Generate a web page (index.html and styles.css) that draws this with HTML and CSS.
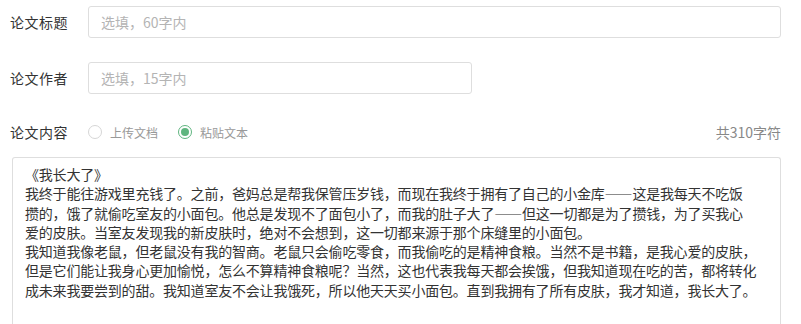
FILE: index.html
```html
<!DOCTYPE html>
<html lang="zh-CN">
<head>
    <meta charset="UTF-8">
    <meta name="viewport" content="width=device-width, initial-scale=1.0">
    <title>论文信息</title>
    <link rel="stylesheet" href="styles.css">
</head>
<body>
    <div class="form">
        <!-- 标题 -->
        <div class="row row-title">
            <label class="label">论文标题</label>
            <input class="input" type="text" placeholder="选填，60字内">
        </div>

        <!-- 作者 -->
        <div class="row row-author">
            <label class="label">论文作者</label>
            <input class="input input-short" type="text" placeholder="选填，15字内">
        </div>

        <!-- 内容 -->
        <div class="row row-content">
            <label class="label">论文内容</label>
            <div class="radio-group">
                <span class="radio"><i class="radio-dot"></i>上传文档</span>
                <span class="radio checked"><i class="radio-dot"></i>粘贴文本</span>
            </div>
            <div class="count">共<span class="count-num">310</span>字符</div>
        </div>

        <div class="content-box">
            《我长大了》<br>
            我终于能往游戏里充钱了。之前，爸妈总是帮我保管压岁钱，而现在我终于拥有了自己的小金库——这是我每天不吃饭<br>
            攒的，饿了就偷吃室友的小面包。他总是发现不了面包小了，而我的肚子大了——但这一切都是为了攒钱，为了买我心<br>
            爱的皮肤。当室友发现我的新皮肤时，绝对不会想到，这一切都来源于那个床缝里的小面包。<br>
            我知道我像老鼠，但老鼠没有我的智商。老鼠只会偷吃零食，而我偷吃的是精神食粮。当然不是书籍，是我心爱的皮肤，<br>
            但是它们能让我身心更加愉悦，怎么不算精神食粮呢？当然，这也代表我每天都会挨饿，但我知道现在吃的苦，都将转化<br>
            成未来我要尝到的甜。我知道室友不会让我饿死，所以他天天买小面包。直到我拥有了所有皮肤，我才知道，我长大了。
        </div>
    </div>
</body>
</html>
```

FILE: styles.css
```css
:root {
    --text: #333333;
    --muted: #999999;
    --border: #dedede;
    --green: #5fb57f;
}

* {
    margin: 0;
    padding: 0;
    box-sizing: border-box;
}

body {
    font-family: 'Noto Sans CJK SC', 'Noto Sans', sans-serif;
    font-size: 14px;
    color: var(--text);
    background: #ffffff;
    overflow: hidden;
}

.form {
    padding: 6px 20px 0 10px;
}

.row {
    display: flex;
    align-items: center;
}

.row-title,
.row-author {
    height: 32px;
}

.row-author {
    margin-top: 24px;
}

.row-content {
    height: 20px;
    margin-top: 28px;
}

.label {
    width: 78px;
    flex-shrink: 0;
    letter-spacing: 0.5px;
    color: var(--text);
}

.input {
    flex: 1;
    height: 32px;
    border: 1px solid var(--border);
    border-radius: 3px;
    padding: 0 12px;
    font-family: inherit;
    font-size: 14px;
    color: var(--text);
    outline: none;
}

.input::placeholder {
    color: #b4b4b4;
}

.input-short {
    flex: 0 0 384px;
}

.radio-group {
    display: flex;
    gap: 20px;
}

.radio {
    display: flex;
    align-items: center;
    gap: 8px;
    font-size: 12px;
    color: var(--muted);
}

.radio-dot {
    width: 14px;
    height: 14px;
    border: 1px solid #d6d6d6;
    border-radius: 50%;
    position: relative;
}

.radio.checked .radio-dot {
    border-color: var(--green);
}

.radio.checked .radio-dot::after {
    content: '';
    position: absolute;
    top: 2px;
    left: 2px;
    width: 8px;
    height: 8px;
    border-radius: 50%;
    background: var(--green);
}

.count {
    margin-left: auto;
    font-size: 14px;
    color: #888888;
}

.count-num {
    color: #888888;
}

.content-box {
    margin: 15px 0 0 2px;
    height: 167px;
    border: 1px solid var(--border);
    border-bottom: none;
    border-radius: 3px 3px 0 0;
    padding: 7px 12px;
    line-height: 19.3px;
    letter-spacing: -0.2px;
    white-space: nowrap;
    overflow: hidden;
    color: var(--text);
}
```
